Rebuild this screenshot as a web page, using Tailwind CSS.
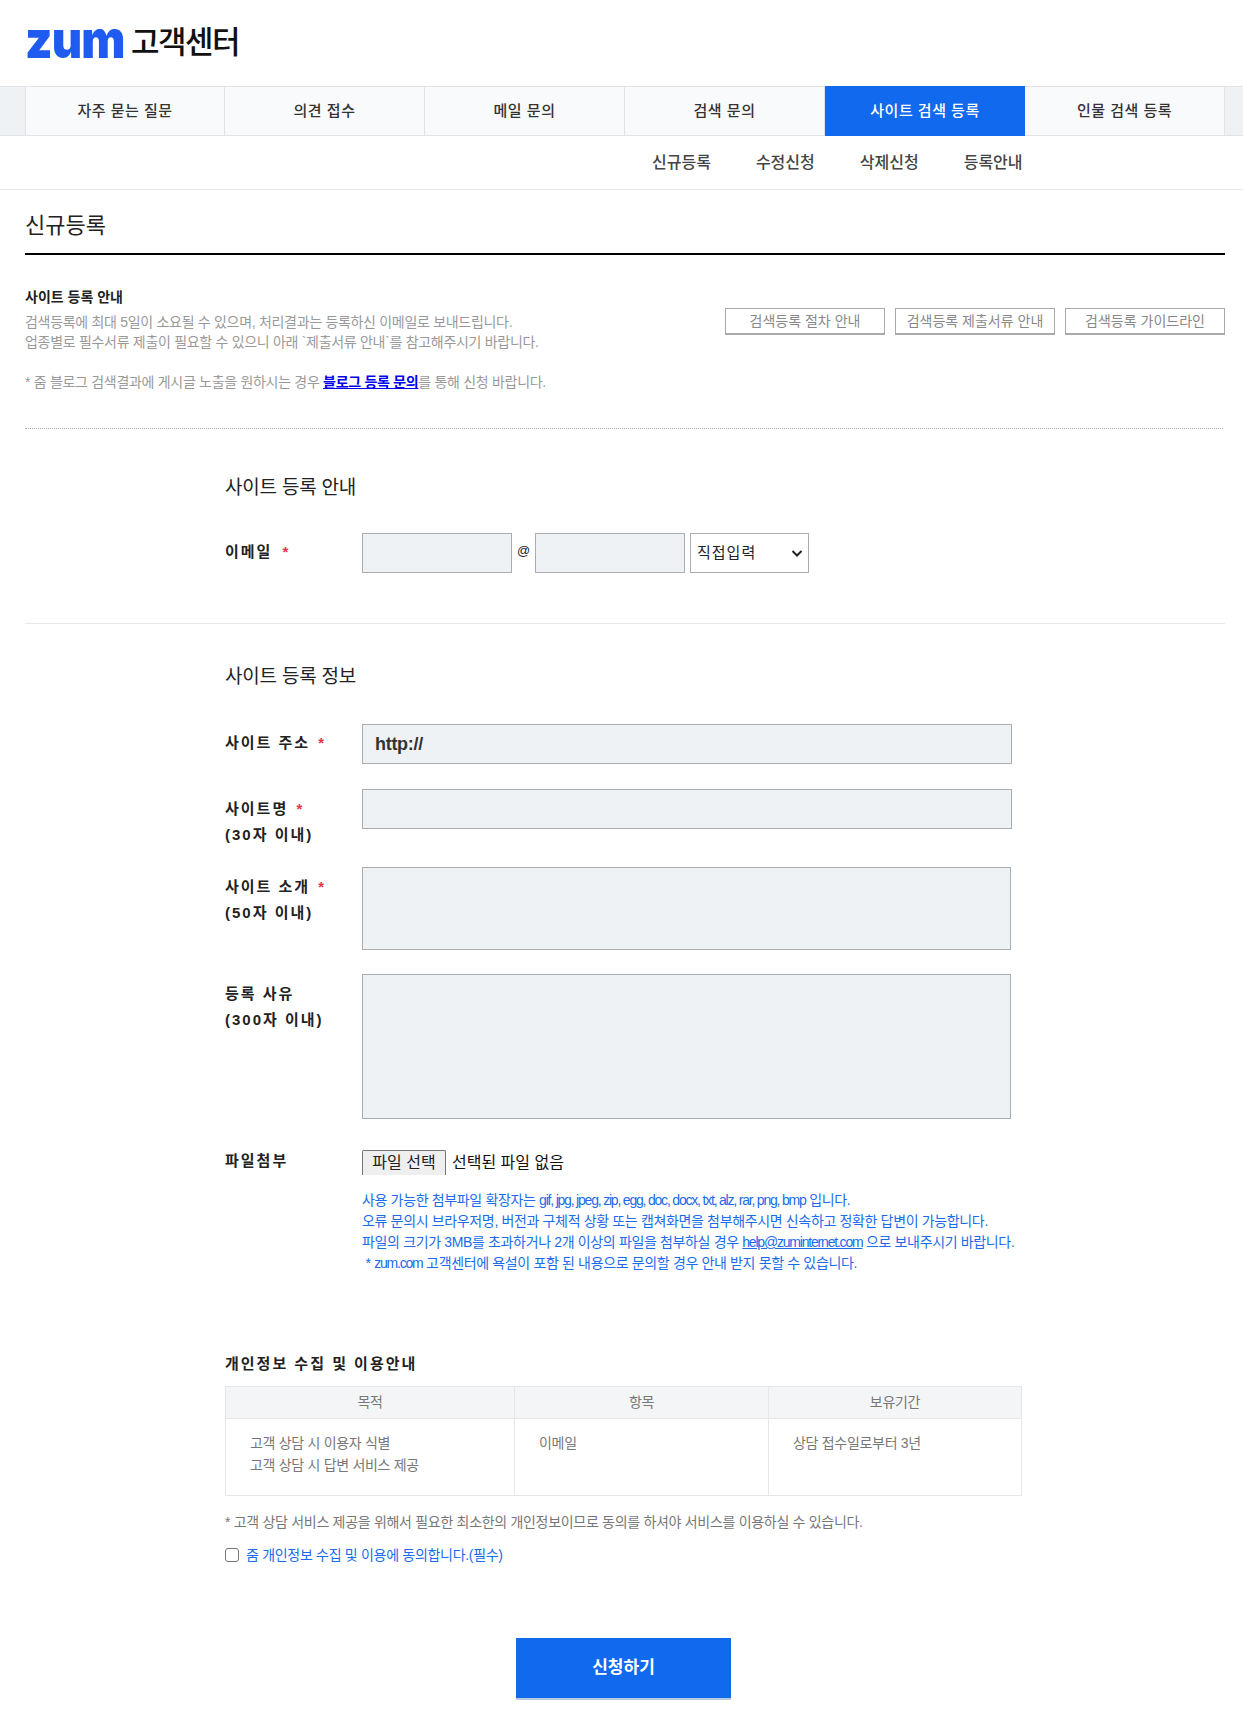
<!DOCTYPE html>
<html lang="ko">
<head>
    <meta charset="UTF-8">
    <meta name="viewport" content="width=device-width, initial-scale=1.0">
    <title>ZUM 고객센터</title>
    <script src="https://cdn.jsdelivr.net/npm/@tailwindcss/browser@4"></script>
</head>
<body class="bg-white text-[#222] font-['Liberation_Sans','Noto_Sans_CJK_KR',sans-serif] text-[14px]">
    <!-- Header -->
    <header class="h-[86px] pl-[25px] pt-[19px] flex items-start">
        <span class="font-['Inter',sans-serif] font-black text-[52px] leading-[42px] tracking-[-1px] text-[#1f5bf0] scale-x-[0.9] origin-left w-[106px] block">zum</span>
        <span class="font-['Noto_Sans_CJK_KR',sans-serif] font-medium text-[31px] leading-[42px] tracking-[-1.5px] text-[#111]">고객센터</span>
    </header>

    <!-- Main tabs -->
    <nav class="h-[50px] bg-[#eff2f5] border-y border-[#e1e3e6] pl-[25px] flex">
        <a class="w-[200px] shrink-0 bg-[#f9fafc] border-x border-[#e1e3e6] flex items-center justify-center text-[15px] tracking-[0.5px] font-medium text-[#333]">자주 묻는 질문</a>
        <a class="w-[200px] shrink-0 bg-[#f9fafc] border-r border-[#e1e3e6] flex items-center justify-center text-[15px] tracking-[0.5px] font-medium text-[#333]">의견 접수</a>
        <a class="w-[200px] shrink-0 bg-[#f9fafc] border-r border-[#e1e3e6] flex items-center justify-center text-[15px] tracking-[0.5px] font-medium text-[#333]">메일 문의</a>
        <a class="w-[200px] shrink-0 bg-[#f9fafc] border-r border-[#e1e3e6] flex items-center justify-center text-[15px] tracking-[0.5px] font-medium text-[#333]">검색 문의</a>
        <a class="w-[200px] shrink-0 -my-px bg-[#1169ee] flex items-center justify-center text-[15px] tracking-[0.5px] font-medium text-white">사이트 검색 등록</a>
        <a class="w-[200px] shrink-0 bg-[#f9fafc] border-r border-[#e1e3e6] flex items-center justify-center text-[15px] tracking-[0.5px] font-medium text-[#333]">인물 검색 등록</a>
    </nav>

    <!-- Sub tabs -->
    <div class="h-[54px] border-b border-[#e6e7e9] pl-[652px] pt-px flex items-center gap-[45px] text-[16px] font-medium text-[#444]">
        <a>신규등록</a>
        <a>수정신청</a>
        <a>삭제신청</a>
        <a>등록안내</a>
    </div>

    <main class="pl-[25px]">
        <h1 class="h-[65px] w-[1200px] pt-[21px] border-b-2 border-black text-[22px] leading-[30px] text-[#222]">신규등록</h1>

        <!-- Guide -->
        <section class="pt-[32px] h-[174px] border-b border-dotted border-[#aaa] w-[1198px] relative">
            <h3 class="text-[14px] leading-[20px] font-bold text-[#222]">사이트 등록 안내</h3>
            <p class="mt-[5px] leading-[20px] text-[#999] tracking-[-0.3px]">검색등록에 최대 5일이 소요될 수 있으며, 처리결과는 등록하신 이메일로 보내드립니다.<br>업종별로 필수서류 제출이 필요할 수 있으니 아래 `제출서류 안내`를 참고해주시기 바랍니다.</p>
            <p class="mt-[20px] leading-[20px] text-[#999] tracking-[-0.3px]">* 줌 블로그 검색결과에 게시글 노출을 원하시는 경우 <a class="font-bold text-[#0000ee] underline">블로그 등록 문의</a>를 통해 신청 바랍니다.</p>
            <div class="absolute right-[-2px] top-[53px] flex gap-[10px]">
                <a class="w-[160px] h-[27px] border border-[#aaa] border-b-2 flex items-center justify-center text-[#888]">검색등록 절차 안내</a>
                <a class="w-[160px] h-[27px] border border-[#aaa] border-b-2 flex items-center justify-center text-[#888]">검색등록 제출서류 안내</a>
                <a class="w-[160px] h-[27px] border border-[#aaa] border-b-2 flex items-center justify-center text-[#888]">검색등록 가이드라인</a>
            </div>
        </section>

        <!-- Email -->
        <section class="h-[195px] border-b border-[#e6e8ea] w-[1200px] pl-[200px]">
            <h2 class="pt-[45px] text-[19px] leading-[28px] tracking-[-0.2px] text-[#222]">사이트 등록 안내</h2>
            <div class="mt-[31px] flex">
                <label class="w-[137px] pt-[9px] text-[15px] tracking-[2px] leading-[20px] font-bold">이메일 <span class="text-[#e8354a] ml-1">*</span></label>
                <input class="w-[150px] h-[40px] bg-[#eff2f5] border border-[#aaadb2]">
                <span class="w-[23px] text-center pt-[8px] text-[13px] leading-[20px]">@</span>
                <input class="w-[150px] h-[40px] bg-[#eff2f5] border border-[#aaadb2]">
                <div class="ml-[5px] w-[119px] h-[40px] border border-[#aaadb2] flex items-center justify-between pl-[6px] pr-[4px] text-[15px] tracking-[1px]">
                    <span>직접입력</span>
                    <svg class="w-[14px] h-[14px]" viewBox="0 0 14 14" fill="none" stroke="#222" stroke-width="2"><path d="M2.500 5l4.500 4.500 4.500-4.500"/></svg>
                </div>
            </div>
        </section>

        <!-- Site info -->
        <section class="pl-[200px]">
            <h2 class="pt-[39px] text-[19px] leading-[28px] tracking-[-0.2px] text-[#222]">사이트 등록 정보</h2>
            <div class="mt-[33px] flex">
                <label class="w-[137px] pt-[9px] text-[15px] tracking-[2px] leading-[20px] font-bold">사이트 주소 <span class="text-[#e8354a] ml-0.5">*</span></label>
                <input class="w-[650px] h-[40px] bg-[#eff2f5] border border-[#aaadb2] px-[12px] text-[18px] tracking-[-0.3px] font-bold text-[#333]" value="http://">
            </div>
            <div class="mt-[25px] flex">
                <label class="w-[137px] pt-[7px] text-[15px] tracking-[2px] leading-[26px] font-bold">사이트명 <span class="text-[#e8354a] ml-0.5">*</span><br>(30자 이내)</label>
                <input class="w-[650px] h-[40px] bg-[#eff2f5] border border-[#aaadb2]">
            </div>
            <div class="mt-[19px] flex">
                <label class="w-[137px] pt-[7px] text-[15px] tracking-[2px] leading-[26px] font-bold">사이트 소개 <span class="text-[#e8354a] ml-0.5">*</span><br>(50자 이내)</label>
                <textarea class="w-[649px] h-[83px] bg-[#eff2f5] border border-[#aaadb2] resize-none"></textarea>
            </div>
            <div class="mt-[24px] flex">
                <label class="w-[137px] pt-[7px] text-[15px] tracking-[2px] leading-[26px] font-bold">등록 사유<br>(300자 이내)</label>
                <textarea class="w-[649px] h-[145px] bg-[#eff2f5] border border-[#aaadb2] resize-none"></textarea>
            </div>
            <div class="mt-[31px] flex">
                <label class="w-[137px] text-[15px] tracking-[2px] leading-[20px] font-bold pt-[1px]">파일첨부</label>
                <div>
                    <div class="flex items-center">
                        <span class="h-[25px] w-[84px] border border-b-0 border-[#777] rounded-t-[2px] bg-[#efefef] flex items-center justify-center text-[16px]">파일 선택</span>
                        <span class="ml-[6px] text-[16px] text-[#111]">선택된 파일 없음</span>
                    </div>
                    <p class="mt-[15px] leading-[21px] text-[#1a6cea] tracking-[-0.35px] whitespace-nowrap">
                        사용 가능한 첨부파일 확장자는 <span class="tracking-[-1.2px]">gif, jpg, jpeg, zip, egg, doc, docx, txt, alz, rar, png, bmp</span> 입니다.<br>
                        오류 문의시 브라우저명, 버전과 구체적 상황 또는 캡쳐화면을 첨부해주시면 신속하고 정확한 답변이 가능합니다.<br>
                        파일의 크기가 3MB를 초과하거나 2개 이상의 파일을 첨부하실 경우 <a class="underline tracking-[-1.2px]">help@zuminternet.com</a> 으로 보내주시기 바랍니다.<br>
                        &nbsp;* <span class="tracking-[-1.2px]">zum.com</span> 고객센터에 욕설이 포함 된 내용으로 문의할 경우 안내 받지 못할 수 있습니다.
                    </p>
                </div>
            </div>

            <!-- Privacy -->
            <h3 class="mt-[80px] text-[15px] tracking-[2px] leading-[20px] font-bold">개인정보 수집 및 이용안내</h3>
            <table class="mt-[12px] w-[797px] table-fixed border-collapse text-[#777] text-[14px] tracking-[-0.3px]">
                <thead>
                    <tr class="h-[32px] bg-[#f4f5f7]">
                        <th class="w-[289px] border border-[#e6e7e9] font-normal">목적</th>
                        <th class="w-[254px] border border-[#e6e7e9] font-normal">항목</th>
                        <th class="border border-[#e6e7e9] font-normal">보유기간</th>
                    </tr>
                </thead>
                <tbody>
                    <tr class="h-[77px]">
                        <td class="border border-[#e6e7e9] px-[24px] pt-[13px] align-top leading-[22px]">고객 상담 시 이용자 식별<br>고객 상담 시 답변 서비스 제공</td>
                        <td class="border border-[#e6e7e9] px-[24px] pt-[13px] align-top leading-[22px]">이메일</td>
                        <td class="border border-[#e6e7e9] px-[24px] pt-[13px] align-top leading-[22px]">상담 접수일로부터 3년</td>
                    </tr>
                </tbody>
            </table>
            <p class="mt-[16px] leading-[20px] text-[#777] tracking-[-0.3px]">* 고객 상담 서비스 제공을 위해서 필요한 최소한의 개인정보이므로 동의를 하셔야 서비스를 이용하실 수 있습니다.</p>
            <label class="mt-[13px] flex items-center text-[#1a6cea] tracking-[-0.3px] leading-[20px]">
                <span class="w-[14px] h-[14px] border border-[#767676] rounded-[3px] bg-white mr-[7px]"></span>
                줌 개인정보 수집 및 이용에 동의합니다.(필수)
            </label>
        </section>

        <!-- Submit -->
        <div class="mt-[73px] pb-[26px] pl-[491px]">
            <button class="w-[215px] h-[62px] bg-[#1169ee] border-b-2 border-[#b9c9e0] text-white text-[17px] font-bold">신청하기</button>
        </div>
    </main>
</body>
</html>
